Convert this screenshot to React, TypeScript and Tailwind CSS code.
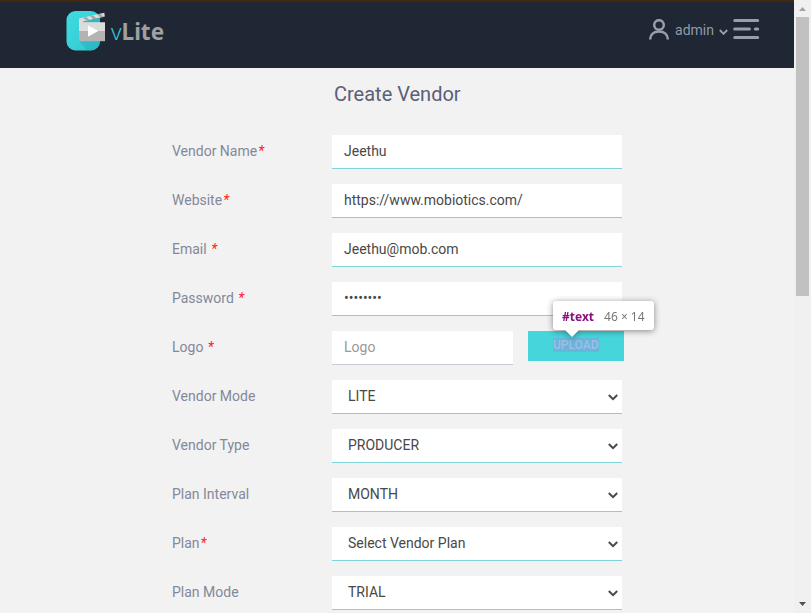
import type { ReactNode } from "react";

type Field = {
  label: string;
  required?: "tight" | "spaced";
  value: string;
  kind: "text" | "select" | "upload";
};

const fields: Field[] = [
  { label: "Vendor Name", required: "tight", value: "Jeethu", kind: "text" },
  { label: "Website", required: "tight", value: "https://www.mobiotics.com/", kind: "text" },
  { label: "Email", required: "spaced", value: "Jeethu@mob.com", kind: "text" },
  { label: "Password", required: "spaced", value: "••••••••", kind: "text" },
  { label: "Logo", required: "spaced", value: "Logo", kind: "upload" },
  { label: "Vendor Mode", value: "LITE", kind: "select" },
  { label: "Vendor Type", value: "PRODUCER", kind: "select" },
  { label: "Plan Interval", value: "MONTH", kind: "select" },
  { label: "Plan", required: "tight", value: "Select Vendor Plan", kind: "select" },
  { label: "Plan Mode", value: "TRIAL", kind: "select" },
];

function LogoMark() {
  return (
    <svg width="40" height="41" viewBox="0 0 40 41" className="shrink-0">
      <defs>
        <linearGradient id="tile" x1="0" y1="0" x2="1" y2="1">
          <stop offset="0" stopColor="#3fdbe2" />
          <stop offset="0.6" stopColor="#38d0d7" />
          <stop offset="1" stopColor="#2fc2ca" />
        </linearGradient>
      </defs>
      <rect x="0.5" y="1" width="33.5" height="39.5" rx="9" fill="url(#tile)" />
      <path d="M13 31L21 40.5H25a9 9 0 0 0 9-9V31Z" fill="#26aeb7" opacity="0.45" />
      <path d="M13 9.5l4-1v3.7h22V21H13Z" fill="#dcdcdc" />
      <path d="M17.5 11.6L39 6.6v5.4H17.5Z" fill="#1f2634" />
      <path d="M17.5 11.6L34 7.7v4.3H17.5Z" fill="#2cbac3" />
      <path d="M13 21h26v10.2H13Z" fill="#b3b3b3" />
      <path d="M13 8.6L38.3 2.8l.5 3.8L14 12.3Z" fill="#dcdcdc" />
      <path d="M17 7.7l3.5 3.1 3.2-.7-3.5-3.1ZM24 6.1l3.5 3.1 3.2-.7-3.5-3.1ZM31 4.5l3.5 3.1 3.2-.7-3.5-3.1Z" fill="#a3a5a7" />
      <path d="M22 15.6L32.3 21 22 26.8Z" fill="#fff" />
    </svg>
  );
}

function Header() {
  return (
    <header className="flex h-[68px] items-start justify-between border-t-2 border-[#432a0b] bg-[#1f2634] pl-[66px] pr-[34px] pt-1">
      <div className="flex pt-1">
        <LogoMark />
        <div className="ml-[5px] mt-[8px] font-['Noto_Sans','Open_Sans',sans-serif] text-[22.5px] font-light leading-[28px] text-[#35cbd4]">
          v<span className="font-bold text-[#9fa0a2]">Lite</span>
        </div>
      </div>
      <div className="flex pt-[12px]">
        <svg width="20" height="22" viewBox="0 0 20 22" fill="none" stroke="#989eac" strokeWidth="2.5" className="mt-px">
          <circle cx="10" cy="6" r="4.8" />
          <path d="M1.2 20.6c0-5.2 3.4-8.2 8.8-8.2s8.8 3 8.8 8.2" />
        </svg>
        <span className="ml-[6px] mt-[2px] text-[14px] leading-[20px] text-[#9299a8]">admin</span>
        <svg width="9" height="6" viewBox="0 0 9 6" fill="none" stroke="#989eac" strokeWidth="1.9" className="ml-[5px] mt-[11px]">
          <path d="M.8 1l3.7 3.8L8.2 1" />
        </svg>
        <svg width="27" height="21" viewBox="0 0 27 21" fill="none" stroke="#989eac" strokeWidth="3" strokeLinecap="round" className="ml-[5px] mt-px">
          <path d="M1.7 1.5h23M1.7 10h14.8M22.3 10h2.4M1.7 18.5h23" />
        </svg>
      </div>
    </header>
  );
}

function Box({ children, className }: { children: ReactNode; className: string }) {
  return <div className={`flex h-[34px] items-center border-b bg-white text-[14px] text-[#484848] ${className}`}>{children}</div>;
}

function Tooltip() {
  return (
    <div className="absolute left-[25px] top-[-30px] z-10 drop-shadow-[0_1px_3px_rgba(0,0,0,0.45)]">
      <div className="flex h-[29px] w-[101px] items-center whitespace-nowrap rounded-[3px] bg-white pl-[9px] pt-[2px] font-['Noto_Sans','Open_Sans',sans-serif] text-[12px] text-[#777]">
        <span className="font-bold text-[#881280]">#text</span>
        <span className="ml-[10px]">46 × 14</span>
      </div>
      <svg width="16" height="8" viewBox="0 0 16 8" className="-mt-px ml-[11px] block">
        <path d="M0 0h16L8 8Z" fill="#fff" />
      </svg>
    </div>
  );
}

function Control({ field }: { field: Field }) {
  if (field.kind === "upload") {
    return (
      <div className="flex items-start">
        <Box className="w-[181px] border-[#c9c9d4] pl-3">
          <span className="text-[#999]">{field.value}</span>
        </Box>
        <div className="relative ml-[15px] flex h-[30px] w-[96px] justify-center bg-[#46d5da] pt-[7px]">
          <span className="h-[14px] w-[46px] whitespace-nowrap bg-[#69b6dc] text-[12px] font-medium leading-[14px] text-[#9dbfe8]">UPLOAD</span>
          <Tooltip />
        </div>
      </div>
    );
  }
  if (field.kind === "select") {
    return (
      <Box className="w-[290px] justify-between border-[#80d3d6] pl-4 pr-[4px]">
        <span>{field.value}</span>
        <svg width="10" height="7" viewBox="0 0 10 7" fill="none" stroke="#484848" strokeWidth="2" className="mt-px">
          <path d="M.8 1L5 5.2 9.2 1" />
        </svg>
      </Box>
    );
  }
  return <Box className="w-[290px] border-[#80d3d6] pl-3"><span>{field.value}</span></Box>;
}

function Scrollbar() {
  return (
    <div className="flex h-full w-[17px] shrink-0 flex-col items-center bg-[#f0f0f0]">
      <svg width="17" height="17" viewBox="0 0 17 17" className="shrink-0">
        <path d="M5 11h7L8.5 7Z" fill="#a3a3a3" />
      </svg>
      <div className="h-[279px] w-[13px] bg-[#c1c1c1]" />
      <svg width="17" height="17" viewBox="0 0 17 17" className="mt-auto shrink-0">
        <path d="M5 6h7L8.5 10Z" fill="#505050" />
      </svg>
    </div>
  );
}

export default function App() {
  return (
    <div className="flex h-[613px] w-[811px] overflow-hidden bg-[#f2f2f2] font-['Roboto',sans-serif]">
      <div className="h-full w-[794px]">
        <Header />
        <main className="pt-[12px]">
          <h1 className="pl-[334px] text-[20px] leading-[28px] text-[#596078]">Create Vendor</h1>
          <div className="mt-[27px] flex flex-col gap-[15px] pl-[172px]">
            {fields.map((field) => (
              <div key={field.label} className="flex h-[34px]">
                <div className="w-[160px] pt-[6px] text-[14px] leading-[20px] text-[#84889a]">
                  {field.label}
                  {field.required === "spaced" && " "}
                  {field.required && <span className="ml-px italic text-[#f22]">*</span>}
                </div>
                <Control field={field} />
              </div>
            ))}
          </div>
        </main>
      </div>
      <Scrollbar />
    </div>
  );
}
